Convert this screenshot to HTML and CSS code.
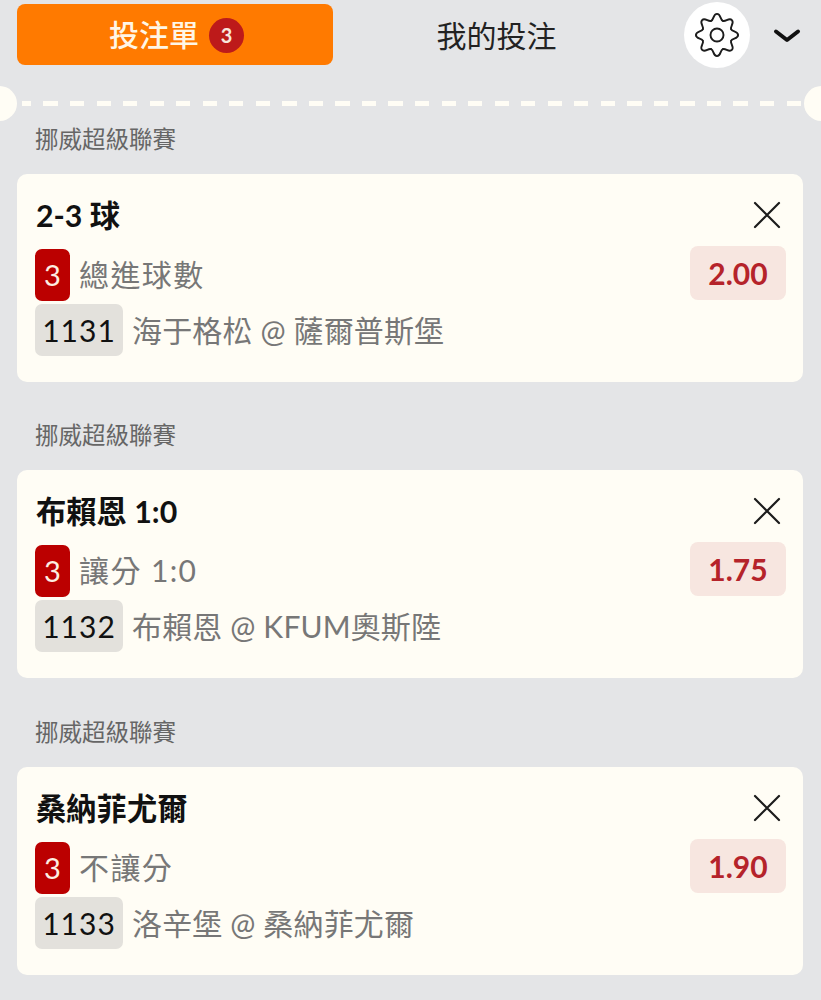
FILE: index.html
```html
<!DOCTYPE html>
<html lang="zh-Hant">
<head>
<meta charset="utf-8">
<title>投注單</title>
<link rel="stylesheet" href="styles.css">
</head>
<body>
<header class="tabs">
  <div class="tab tab-active"><span class="tab-label">投注單</span><span class="count">3</span></div>
  <div class="tab tab-plain"><span class="tab-label-plain">我的投注</span></div>
  <div class="gear">
    <svg width="46" height="46" viewBox="0 0 24 24" fill="none" stroke="#1c1c1c" stroke-width="1" stroke-linecap="round" stroke-linejoin="round">
      <defs><path id="tooth" d="M8.94 4.61C10.4 4.2 9.9 1 12 1C14.1 1 13.6 4.2 15.06 4.61"/></defs>
      <use href="#tooth"/>
      <use href="#tooth" transform="rotate(45 12 12)"/>
      <use href="#tooth" transform="rotate(90 12 12)"/>
      <use href="#tooth" transform="rotate(135 12 12)"/>
      <use href="#tooth" transform="rotate(180 12 12)"/>
      <use href="#tooth" transform="rotate(225 12 12)"/>
      <use href="#tooth" transform="rotate(270 12 12)"/>
      <use href="#tooth" transform="rotate(315 12 12)"/>
      <circle cx="12" cy="12" r="3.4"/>
    </svg>
  </div>
  <div class="chevron">
    <svg width="28" height="18" viewBox="0 0 28 18" fill="none" stroke="#111" stroke-width="4" stroke-linecap="round" stroke-linejoin="round"><path d="M3 4.5 14 13 25 4.5"/></svg>
  </div>
</header>
<div class="divider"></div>

<section class="group">
  <div class="league">挪威超級聯賽</div>
  <article class="card">
    <div class="top"><h2 class="pick">2-3 球</h2><svg class="close" width="30" height="30" viewBox="0 0 30 30" stroke="#1c1c1c" stroke-width="2.2" stroke-linecap="round"><path d="M3 3 27 27M27 3 3 27"/></svg></div>
    <div class="market-row">
      <div class="market"><span class="num">3</span><span class="muted spaced">總進球數</span></div>
      <div class="odds">2.00</div>
    </div>
    <div class="match"><span class="code">1131</span><span class="muted">海于格松 @ 薩爾普斯堡</span></div>
  </article>
</section>

<section class="group">
  <div class="league">挪威超級聯賽</div>
  <article class="card">
    <div class="top"><h2 class="pick">布賴恩 1:0</h2><svg class="close" width="30" height="30" viewBox="0 0 30 30" stroke="#1c1c1c" stroke-width="2.2" stroke-linecap="round"><path d="M3 3 27 27M27 3 3 27"/></svg></div>
    <div class="market-row">
      <div class="market"><span class="num">3</span><span class="muted spaced">讓分 1:0</span></div>
      <div class="odds">1.75</div>
    </div>
    <div class="match"><span class="code">1132</span><span class="muted">布賴恩 @ KFUM奧斯陸</span></div>
  </article>
</section>

<section class="group">
  <div class="league">挪威超級聯賽</div>
  <article class="card">
    <div class="top"><h2 class="pick">桑納菲尤爾</h2><svg class="close" width="30" height="30" viewBox="0 0 30 30" stroke="#1c1c1c" stroke-width="2.2" stroke-linecap="round"><path d="M3 3 27 27M27 3 3 27"/></svg></div>
    <div class="market-row">
      <div class="market"><span class="num">3</span><span class="muted spaced">不讓分</span></div>
      <div class="odds">1.90</div>
    </div>
    <div class="match"><span class="code">1133</span><span class="muted">洛辛堡 @ 桑納菲尤爾</span></div>
  </article>
</section>
</body>
</html>
```
FILE: styles.css
```css
* { box-sizing: border-box; }
html, body { margin: 0; height: 1000px; overflow: hidden; }
body {
  background: #e4e5e7;
  font-family: Lato, "Noto Sans CJK TC", sans-serif;
  color: #111;
}
.tabs {
  display: flex;
  align-items: center;
  height: 70px;
  padding-left: 17px;
}
.tab {
  width: 316px;
  height: 61px;
  margin-top: -1px;
  display: flex;
  align-items: center;
  justify-content: center;
  font-size: 30px;
  flex: none;
}
.tab-active {
  background: #ff7a00;
  border-radius: 8px;
  color: #fff6e6;
  font-weight: 500;
  gap: 10px;
  padding-left: 3px;
}
.tab-label { margin-bottom: 4px; }
.tab-label-plain { margin-bottom: 2px; }
.tab-plain { width: 327px; color: #222; }
.count {
  width: 35px;
  height: 35px;
  margin-bottom: -1px;
  border-radius: 50%;
  background: #bd1a1a;
  color: #f8e6dc;
  font-size: 20px;
  font-weight: 700;
  display: flex;
  align-items: center;
  justify-content: center;
}
.gear {
  width: 66px;
  height: 66px;
  margin-left: 24px;
  border-radius: 50%;
  background: #fff;
  display: flex;
  align-items: center;
  justify-content: center;
  flex: none;
}
.chevron { margin: 2px 0 0 23px; display: flex; }
.divider {
  position: relative;
  height: 0;
  margin: 31px 0 0 22px;
  width: 782px;
  border-top: 5px dashed #fffdf5;
  border-image: repeating-linear-gradient(90deg, #fffdf5 0 14px, transparent 14px 26.2px) 5;
}
.divider::before, .divider::after {
  content: "";
  position: absolute;
  top: -20px;
  width: 35px;
  height: 35px;
  border-radius: 50%;
  background: #fffdf5;
}
.divider::before { left: -40px; }
.divider::after { right: -35px; }
.league {
  padding-left: 35px;
  font-size: 23.5px;
  line-height: 30px;
  color: #666;
}
.group { margin-bottom: 38px; }
.group:first-of-type { margin-top: 18px; }
.group:nth-of-type(2) { margin-bottom: 39px; }
.group .league { margin-bottom: 20px; }
.card {
  margin: 0 18px 0 17px;
  height: 208px;
  padding: 21px 17px 0 18px;
  background: #fffdf5;
  border-radius: 10px;
}
.top { display: flex; align-items: center; justify-content: space-between; height: 40px; }
.pick { margin: 0 0 1px 1px; font-size: 30.3px; font-weight: 700; color: #111; line-height: 40px; }
.close { margin-right: 4px; }
.market-row { display: flex; align-items: flex-start; justify-content: space-between; margin-top: 14px; height: 52px; }
.market, .match { display: flex; align-items: center; }
.num {
  width: 35px;
  height: 52px;
  padding-bottom: 2px;
  border-radius: 7px;
  background: #bb0000;
  color: #fdeee2;
  font-size: 29px;
  display: flex;
  align-items: center;
  justify-content: center;
  margin-right: 9px;
}
.muted { color: #777; font-size: 30px; white-space: nowrap; line-height: 48px; letter-spacing: .15px; }
.spaced { letter-spacing: 1.4px; margin-bottom: 2px; }
.odds {
  width: 96px;
  height: 54px;
  margin-top: -3px;
  border-radius: 8px;
  background: #f7e6e0;
  color: #b5232a;
  font-size: 30px;
  font-weight: 700;
  display: flex;
  align-items: center;
  justify-content: center;
}
.match { margin-top: 3px; }
.code {
  width: 88px;
  height: 52px;
  padding-bottom: 1px;
  border-radius: 7px;
  background: #e3e1dc;
  color: #111;
  font-size: 30px;
  display: flex;
  align-items: center;
  justify-content: center;
  margin-right: 9px;
  letter-spacing: 1px;
}
```
